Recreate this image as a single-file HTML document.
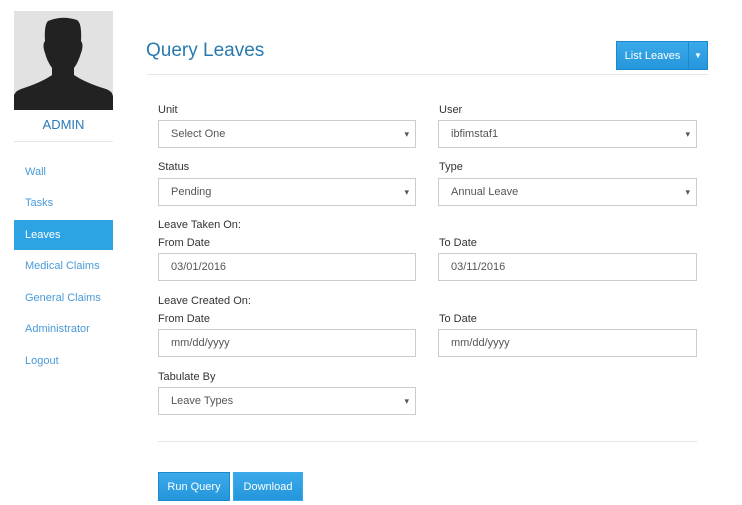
<!DOCTYPE html>
<html><head><meta charset="utf-8"><style>
*{box-sizing:border-box;margin:0;padding:0}
body{width:742px;height:505px;background:#fff;font-family:"Liberation Sans",sans-serif;position:relative;overflow:hidden;color:#333}
.a{position:absolute}
.nav{position:absolute;left:14px;width:99px;height:30px;line-height:30px;padding-left:11px;font-size:11px;color:#4a9ad8}
.nav.on{background:#2ea3e3;color:#fff}
.lbl{position:absolute;font-size:11px;color:#333}
.box{position:absolute;height:28px;border:1px solid #ccc;background:#fff;font-size:11px;color:#555;line-height:26px;padding-left:12px}
.box.sel::after{content:"▾";position:absolute;right:6px;top:0;font-size:9px;color:#555}
.btn{position:absolute;background:linear-gradient(#3aaaea,#2596dc);color:#fff;font-size:11px;text-align:center;line-height:28px;border:1px solid #1e88cc}
</style></head><body>
<svg class="a" style="left:14px;top:11px" width="99" height="99" viewBox="0 0 99 99">
<rect width="99" height="99" fill="#e2e2e2"/>
<path d="M34 10 Q48 4 63 9 Q68 12 67 30 Q70 34 67 42 Q64 52 60 57 L60 64 Q72 72 92 78 Q98 80 99 85 L99 99 L0 99 L0 84 Q2 79 10 77 Q28 71 38 64 L38 57 Q33 50 31 42 Q28 34 31 30 Q30 14 34 10 Z" fill="#222"/>
</svg>
<div class="a" style="left:14px;top:117px;width:99px;text-align:center;font-size:13px;color:#2a7ab8">ADMIN</div>
<div class="a" style="left:14px;top:141px;width:99px;height:1px;background:#e6e6e6"></div>
<div class="nav" style="top:157px">Wall</div>
<div class="nav" style="top:188px">Tasks</div>
<div class="nav on" style="top:220px">Leaves</div>
<div class="nav" style="top:251px">Medical Claims</div>
<div class="nav" style="top:283px">General Claims</div>
<div class="nav" style="top:314px">Administrator</div>
<div class="nav" style="top:346px">Logout</div>

<div class="a" style="left:146px;top:40px;font-size:19px;color:#2a7ab0">Query Leaves</div>
<div class="a" style="left:147px;top:74px;width:561px;height:1px;background:#e6e6e6"></div>
<div class="btn" style="left:616px;top:41px;width:73px;height:29px;border-right:1px solid #1e88cc">List Leaves</div>
<div class="btn" style="left:688px;top:41px;width:20px;height:29px;font-size:8px">▼</div>

<div class="lbl" style="left:158px;top:104px">Unit</div>
<div class="box sel" style="left:158px;top:120px;width:258px">Select One</div>
<div class="lbl" style="left:439px;top:104px">User</div>
<div class="box sel" style="left:438px;top:120px;width:259px">ibfimstaf1</div>
<div class="lbl" style="left:158px;top:161px">Status</div>
<div class="box sel" style="left:158px;top:178px;width:258px">Pending</div>
<div class="lbl" style="left:439px;top:161px">Type</div>
<div class="box sel" style="left:438px;top:178px;width:259px">Annual Leave</div>
<div class="lbl" style="left:158px;top:219px">Leave Taken On:</div>
<div class="lbl" style="left:158px;top:237px">From Date</div>
<div class="lbl" style="left:439px;top:237px">To Date</div>
<div class="box" style="left:158px;top:253px;width:258px">03/01/2016</div>
<div class="box" style="left:438px;top:253px;width:259px">03/11/2016</div>
<div class="lbl" style="left:158px;top:295px">Leave Created On:</div>
<div class="lbl" style="left:158px;top:313px">From Date</div>
<div class="lbl" style="left:439px;top:313px">To Date</div>
<div class="box" style="left:158px;top:329px;width:258px">mm/dd/yyyy</div>
<div class="box" style="left:438px;top:329px;width:259px">mm/dd/yyyy</div>
<div class="lbl" style="left:158px;top:371px">Tabulate By</div>
<div class="box sel" style="left:158px;top:387px;width:258px">Leave Types</div>
<div class="a" style="left:158px;top:441px;width:539px;height:1px;background:#e6e6e6"></div>
<div class="btn" style="left:158px;top:472px;width:72px;height:29px">Run Query</div>
<div class="btn" style="left:233px;top:472px;width:70px;height:29px;border-color:#3aaaea">Download</div>
</body></html>
